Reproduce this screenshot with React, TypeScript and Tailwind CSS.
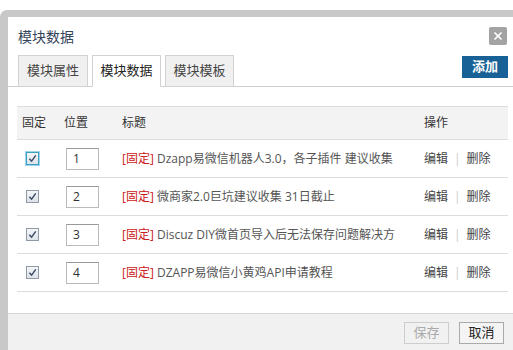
import { X } from 'lucide-react'

const rows = [
  { pos: 1, title: 'Dzapp易微信机器人3.0，各子插件 建议收集', focus: true },
  { pos: 2, title: '微商家2.0巨坑建议收集 31日截止' },
  { pos: 3, title: 'Discuz DIY微首页导入后无法保存问题解决方' },
  { pos: 4, title: 'DZAPP易微信小黄鸡API申请教程' },
]

const font = { fontFamily: '"Open Sans", "Noto Sans CJK SC", sans-serif' }

function Check({ focus }: { focus?: boolean }) {
  return (
    <span
      className={
        'flex h-[13px] w-[13px] items-center justify-center border bg-gradient-to-b from-[#f4f6f8] to-[#dde3ea] ' +
        (focus ? 'border-[#3c9fc4] ring-1 ring-[#9fd3e8]' : 'border-[#8f9aa6]')
      }
    >
      <svg viewBox="0 0 10 10" className="h-[9px] w-[9px]">
        <path d="M1.5 5.2 L4 8 L8.6 1.6" fill="none" stroke="#3b4a66" strokeWidth="1.6" />
      </svg>
    </span>
  )
}

export default function App() {
  return (
    <div className="h-[350px] w-[513px] overflow-hidden bg-white pt-[10px]" style={font}>
      <div className="h-[340px] rounded-tl-[7px] bg-[#c8c8c8] pl-[8px] pt-[7px]">
        <div className="flex h-[333px] flex-col bg-white">
          {/* Title */}
          <div className="flex h-[38px] items-center justify-between pl-[10px] pr-[6px]">
            <span className="text-[14px] text-[#34445a]">模块数据</span>
            <button className="flex h-[18px] w-[18px] items-center justify-center rounded-[2px] bg-[#a3a3a3] text-white">
              <X className="h-[12px] w-[12px]" strokeWidth={3.5} />
            </button>
          </div>

          {/* Tabs */}
          <div className="flex h-[32px] items-end justify-between border-b border-[#cfcfcf] pr-[5px]">
            <div className="flex items-end gap-[4px] pl-[10px]">
              <div className="-mb-px flex h-[32px] w-[70px] items-center justify-center border border-[#d2d2d2] bg-[#f0f0f0] text-[13px] text-[#444]">
                模块属性
              </div>
              <div className="-mb-px flex h-[32px] w-[69px] items-center justify-center border border-b-white border-[#d2d2d2] bg-white text-[13px] text-[#222]">
                模块数据
              </div>
              <div className="-mb-px flex h-[32px] w-[69px] items-center justify-center border border-[#d2d2d2] bg-[#f0f0f0] text-[13px] text-[#444]">
                模块模板
              </div>
            </div>
            <button className="mb-[8px] flex h-[22px] w-[46px] items-center justify-center bg-[#176196] text-[13px] font-bold text-white">
              添加
            </button>
          </div>

          {/* Table */}
          <div className="mt-[19px] ml-[9px] mr-[5px] text-[12px]">
            <div className="grid h-[34px] grid-cols-[42px_58px_302px_1fr] items-center border-y border-[#dcdcdc] bg-[#f3f3f3] text-[#333]">
              <span className="pl-[5px]">固定</span>
              <span className="pl-[5px]">位置</span>
              <span className="pl-[5px]">标题</span>
              <span className="pl-[5px]">操作</span>
            </div>
            {rows.map((r) => (
              <div
                key={r.pos}
                className="grid h-[38px] grid-cols-[42px_58px_302px_1fr] items-center border-b border-[#dcdcdc] text-[#555]"
              >
                <span className="pl-[9px]">
                  <Check focus={r.focus} />
                </span>
                <span className="pl-[7px]">
                  <span className="flex h-[22px] w-[33px] items-center border border-[#bbb] border-t-[#999] pl-[6px] text-[12px] text-[#333]">
                    {r.pos}
                  </span>
                </span>
                <span className="whitespace-nowrap pl-[5px]">
                  <span className="text-[#cc2020]">[固定]</span> {r.title}
                </span>
                <span className="flex items-center pl-[5px] text-[#444]">
                  编辑<span className="mx-[6px] text-[#ccc]">|</span>删除
                </span>
              </div>
            ))}
          </div>

          {/* Footer */}
          <div className="mt-auto flex h-[37px] items-center justify-end gap-[10px] border-t border-[#d6d6d6] bg-[#f1f1f1] pr-[9px] pt-[1px]">
            <button className="flex h-[22px] w-[45px] items-center justify-center border border-[#cdcdcd] bg-[#f1f1f1] text-[13px] text-[#aaa]">
              保存
            </button>
            <button className="flex h-[22px] w-[45px] items-center justify-center border border-[#aaa] bg-[#f4f4f4] text-[13px] text-[#222]">
              取消
            </button>
          </div>
        </div>
      </div>
    </div>
  )
}
